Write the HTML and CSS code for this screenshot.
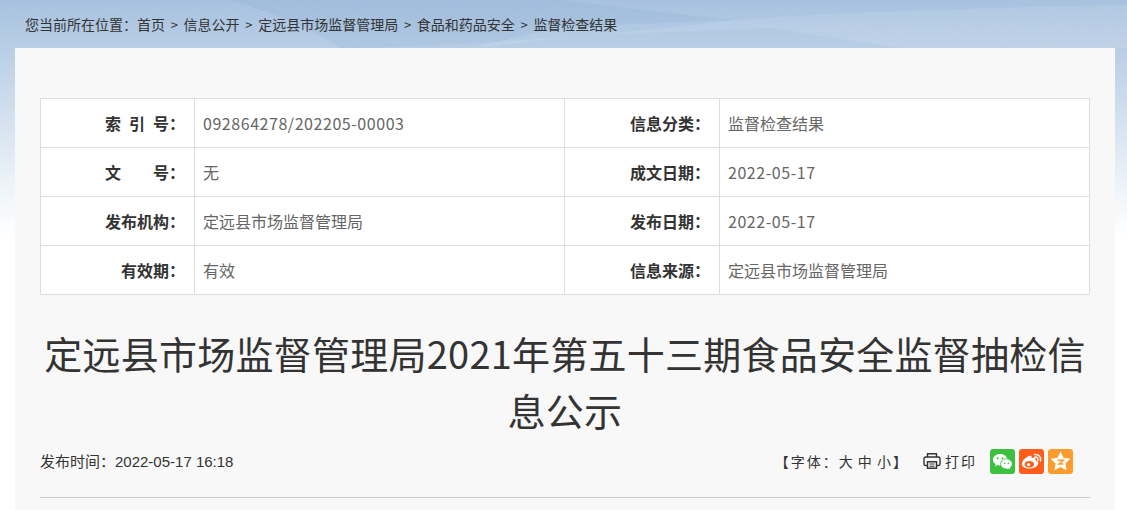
FILE: index.html
```html
<!DOCTYPE html>
<html lang="zh-CN">
<head>
<meta charset="utf-8">
<title>定远县市场监督管理局2021年第五十三期食品安全监督抽检信息公示</title>
<link rel="stylesheet" href="styles.css">
</head>
<body>
<svg class="backdrop" width="1127" height="240" viewBox="0 0 1127 240" aria-hidden="true">
  <defs>
    <linearGradient id="fade" x1="0" y1="0" x2="0" y2="1">
      <stop offset="0" stop-color="#a5c0de"/>
      <stop offset="0.2" stop-color="#b7cde5"/>
      <stop offset="0.55" stop-color="#d8e4f1"/>
      <stop offset="0.85" stop-color="#f4f8fb"/>
      <stop offset="1" stop-color="#ffffff"/>
    </linearGradient>
    <pattern id="hatch" width="6" height="3" patternUnits="userSpaceOnUse" patternTransform="rotate(-24)">
      <rect width="6" height="1" fill="#ffffff" opacity="0.07"/>
    </pattern>
  </defs>
  <rect width="1127" height="240" fill="url(#fade)"/>
  <path d="M230 0H560Q640 10 735 20L560 27 470 48H340Q300 20 230 0Z" fill="#7fa3cb" opacity="0.16"/>
  <path d="M360 48Q560 42 735 20Q860 10 1127 5V48H900L770 28 590 35 470 48Z" fill="#ffffff" opacity="0.1"/>
  <rect width="1127" height="240" fill="url(#hatch)"/>
</svg>
<nav class="crumbs">
  <span>您当前所在位置：</span><a>首页</a><i>&gt;</i><a>信息公开</a><i>&gt;</i><a>定远县市场监督管理局</a><i>&gt;</i><a>食品和药品安全</a><i>&gt;</i><a>监督检查结果</a>
</nav>
<main class="card">
  <table class="info">
    <colgroup><col class="c1"><col class="c2"><col class="c3"><col class="c4"></colgroup>
    <tr><th><span class="spread">索引</span>号：</th><td class="num">092864278/202205-00003</td><th>信息分类：</th><td>监督检查结果</td></tr>
    <tr><th>文&emsp;&emsp;号：</th><td>无</td><th>成文日期：</th><td class="num">2022-05-17</td></tr>
    <tr><th>发布机构：</th><td>定远县市场监督管理局</td><th>发布日期：</th><td class="num">2022-05-17</td></tr>
    <tr><th>有效期：</th><td>有效</td><th>信息来源：</th><td>定远县市场监督管理局</td></tr>
  </table>
  <h1 class="title">定远县市场监督管理局2021年第五十三期食品安全监督抽检信息公示</h1>
  <div class="meta">
    <span class="date">发布时间：2022-05-17 16:18</span>
    <div class="tools">
      <span class="size">【字体：大 中 小】</span>
      <span class="print">
        <svg width="18" height="18" viewBox="0 0 18 18" fill="none" stroke="#333" stroke-width="1.4">
          <path d="M4.5 5V1.8h9V5"/>
          <path d="M4.5 13.5H2.6a1.6 1.6 0 0 1-1.6-1.6V6.6A1.6 1.6 0 0 1 2.6 5h12.8A1.6 1.6 0 0 1 17 6.6v5.3a1.6 1.6 0 0 1-1.6 1.6h-1.9"/>
          <path d="M4.5 9.8h9v6.4h-9z"/>
          <path d="M6.5 12h5M6.5 14.2h5" stroke-width="1.1"/>
        </svg>
        打印
      </span>
      <div class="share">
        <span class="btn wechat">
          <svg width="25" height="25" viewBox="0 0 25 25" fill="#fff">
            <path d="M10 5C6 5 3 7.600 3 10.800c0 1.900 1 3.400 2.700 4.500L5 17.400l2.400-1.300c.8.200 1.500.4 2.400.4h.7a5.300 5.300 0 0 1-.2-1.500c0-3.100 2.700-5.500 6.300-5.500h.6C16.500 7 13.500 5 10 5z"/>
            <path d="M22 15c0-2.600-2.600-4.700-5.500-4.700-3.100 0-5.500 2.100-5.500 4.700s2.400 4.700 5.500 4.700c.6 0 1.300-.2 1.900-.3l1.800 1-.5-1.700C21 17.700 22 16.400 22 15z"/>
            <circle cx="7.700" cy="9.300" r="1" fill="#3bc03f"/><circle cx="12.400" cy="9.300" r="1" fill="#3bc03f"/>
            <circle cx="14.600" cy="14.200" r=".8" fill="#3bc03f"/><circle cx="18.400" cy="14.200" r=".8" fill="#3bc03f"/>
          </svg>
        </span>
        <span class="btn weibo">
          <svg width="25" height="25" viewBox="0 0 25 25" fill="none">
            <path d="M10.800 19.600c-4 0-7.800-1.700-7.800-4.600 0-1.700 1.100-3.600 3-5.400 2.500-2.400 5.300-3.500 6.300-2.500.5.500.5 1.300.2 2.200 1.600-.6 3.300-.6 3.900.2.300.5.300 1.100 0 1.800 1.500.4 2.900 1.200 2.900 2.800 0 2.700-3.800 5.500-8.500 5.500z" fill="#fff"/>
            <ellipse cx="10.300" cy="15.300" rx="4.600" ry="3.200" fill="#fe5d1c"/>
            <circle cx="9.600" cy="15.600" r="1.700" fill="#fff"/>
            <path d="M15.500 5.500a5.200 5.200 0 0 1 6 6.500M15.900 8.200a2.500 2.500 0 0 1 3 3.200" stroke="#fff" stroke-width="1.500" stroke-linecap="round"/>
          </svg>
        </span>
        <span class="btn qzone">
          <svg width="25" height="25" viewBox="0 0 25 25">
            <path d="M12.500 2.500l3 6.200 6.800 1-4.900 4.700 1.200 6.800-6.100-3.200-6.100 3.200 1.200-6.800-4.900-4.700 6.800-1z" fill="#fff"/>
            <path d="M9.600 11.200h5.800l-4.400 3.900h4.400" fill="none" stroke="#fd9c2c" stroke-width="1.500"/>
          </svg>
        </span>
      </div>
    </div>
  </div>
  <hr class="rule">
</main>
</body>
</html>
```

FILE: styles.css
```css
* { box-sizing: border-box; }
html, body { margin: 0; height: 510px; overflow: hidden; }
body {
  position: relative;
  background: #fff;
  font-family: "Noto Sans CJK SC", "Noto Sans", sans-serif;
  color: #333;
}
.backdrop { position: absolute; top: 0; left: 0; z-index: 0; }
.crumbs {
  position: relative;
  display: flex;
  align-items: center;
  height: 48px;
  padding: 0 0 0 25px;
  font-size: 14px;
  color: #333;
}
.crumbs i { font-style: normal; width: 18.600px; text-align: center; font-size: 13px; }
.card {
  position: relative;
  width: 1100px;
  height: 462px;
  margin-left: 15px;
  padding: 50px 25px 0;
  background: #f8f8f8;
}
.info {
  width: 1049px;
  border-collapse: collapse;
  table-layout: fixed;
  background: #fff;
  font-size: 16px;
}
.c1 { width: 154px; }
.c2 { width: 370px; }
.c3 { width: 155px; }
.c4 { width: 370px; }
.info th, .info td {
  height: 49px;
  border: 1px solid #ddd;
  padding: 0 0 1px;
}
.info th { text-align: right; padding-right: 9px; font-weight: bold; color: #333; }
.info td { text-align: left; padding-left: 8px; color: #666; }
.info .num { letter-spacing: 0.55px; }
.spread { letter-spacing: 8px; }
.title {
  margin: 29px 0 0;
  font-size: 38px;
  line-height: 57px;
  font-weight: normal;
  letter-spacing: 0.24px;
  text-align: center;
  color: #333;
}
.meta {
  display: flex;
  justify-content: space-between;
  align-items: center;
  height: 25px;
  margin-top: 11px;
  font-size: 14px;
}
.date {
  font-family: "Liberation Sans", "Noto Sans CJK SC", sans-serif;
  font-size: 15px;
  margin-bottom: 2px;
}
.tools { display: flex; align-items: center; padding-right: 17px; }
.size { letter-spacing: 2px; word-spacing: -2px; margin-right: 14px; padding-bottom: 2px; }
.print { display: flex; align-items: center; gap: 4px; letter-spacing: 2px; margin-right: 13px; padding-bottom: 2px; }
.share { display: flex; gap: 4px; }
.btn { display: block; width: 25px; height: 25px; border-radius: 3px; }
.btn svg { display: block; }
.wechat { background: #3bc03f; }
.weibo { background: #fe5d1c; }
.qzone { background: #fd9c2c; }
.rule { margin: 23px 0 0; border: 0; border-top: 1px solid #ccc; }
```
